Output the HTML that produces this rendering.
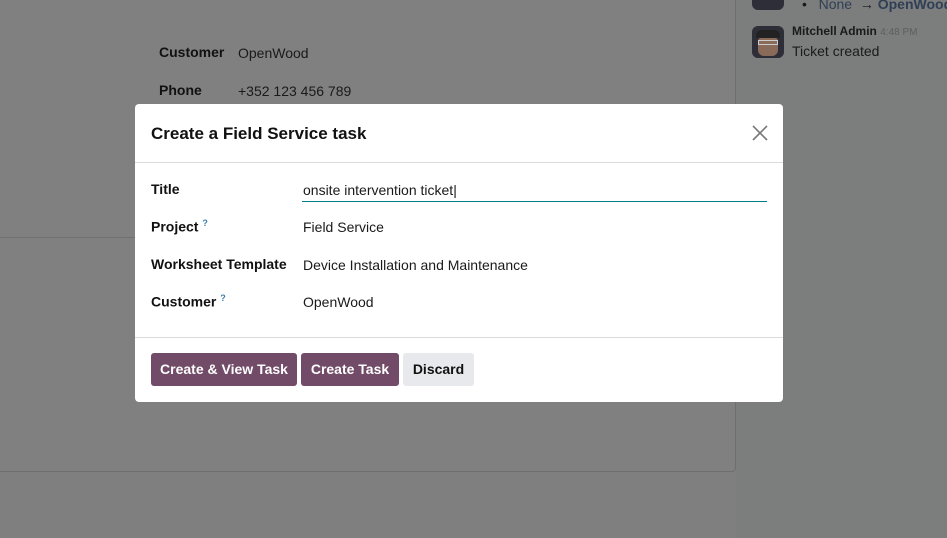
<!DOCTYPE html>
<html><head><meta charset="utf-8"><style>
*{box-sizing:border-box;margin:0;padding:0}
body{width:947px;height:538px;overflow:hidden;background:#7f7f7f;font-family:"Liberation Sans","DejaVu Sans",sans-serif;position:relative;color:#111}
.abs{position:absolute;white-space:nowrap}
.lbl{font-weight:bold;font-size:14px;color:#111}
.val{font-size:14px;color:#1a1a1a}
.btn{position:absolute;top:353px;height:33px;border-radius:3px;font-size:14px;font-weight:bold;line-height:33px;text-align:center}
</style></head><body>
<div class="abs" style="left:0;top:0;width:736px;height:472px;border-right:1px solid #6e6e6e;border-bottom:1px solid #6e6e6e;border-bottom-right-radius:4px;background:#808080"></div>
<div class="abs" style="left:0;top:237px;width:735px;height:1px;background:#717171"></div>
<div class="abs" style="left:736px;top:0;width:211px;height:538px;background:#7c7d7d"></div>
<div class="abs lbl" style="left:159px;top:44px">Customer</div>
<div class="abs val" style="left:238px;top:45px">OpenWood</div>
<div class="abs lbl" style="left:159px;top:82px">Phone</div>
<div class="abs val" style="left:238px;top:83px">+352 123 456 789</div>
<div class="abs" style="left:752px;top:-8px;width:32px;height:18px;border-radius:6px;background:#2e2e38"></div>
<div class="abs" style="left:802px;top:-4px;font-size:14px;color:#1a1a1a">•&nbsp;&nbsp;&nbsp;<span style="color:#2f3f55">None</span>&nbsp;&nbsp;→ <span style="color:#2f3f55;font-weight:bold">OpenWood</span></div>
<div class="abs" style="left:752px;top:26px;width:32px;height:32px;border-radius:6px;background:#2e2e38;overflow:hidden">
<div class="abs" style="left:6px;top:10px;width:20px;height:20px;border-radius:6px;background:#8a6a58"></div>
<div class="abs" style="left:4px;top:4px;width:24px;height:8px;border-radius:6px 6px 2px 2px;background:#222"></div>
<div class="abs" style="left:6px;top:14px;width:20px;height:5px;border:1px solid #ccc"></div></div>
<div class="abs" style="left:792px;top:24px;font-size:12px;font-weight:bold;color:#1a1a1a">Mitchell Admin <span style="font-weight:normal;font-size:10px;color:#5e5e5e">4:48 PM</span></div>
<div class="abs" style="left:792px;top:43px;font-size:14px;color:#1a1a1a">Ticket created</div>

<div class="abs" style="left:135px;top:104px;width:648px;height:298px;background:#fff;border-radius:4px">
<div class="abs" style="left:16px;top:20px;font-size:17px;font-weight:bold;color:#111">Create a Field Service task</div>
<svg class="abs" style="left:617px;top:21px" width="16" height="16"><path d="M1 1L15 15M15 1L1 15" stroke="#777" stroke-width="1.6"/></svg>
<div class="abs" style="left:0;top:58px;width:648px;height:1px;background:#d8dadd"></div>
<div class="abs lbl" style="left:16px;top:77px">Title</div>
<div class="abs val" style="left:168px;top:78px">onsite intervention ticket<span style="font-weight:normal">|</span></div>
<div class="abs" style="left:167px;top:97px;width:465px;height:1px;background:#017e84"></div>
<div class="abs lbl" style="left:16px;top:114px">Project <sup style="color:#3a80b0;font-size:9px">?</sup></div>
<div class="abs val" style="left:168px;top:115px">Field Service</div>
<div class="abs lbl" style="left:16px;top:152px">Worksheet Template</div>
<div class="abs val" style="left:168px;top:153px">Device Installation and Maintenance</div>
<div class="abs lbl" style="left:16px;top:189px">Customer <sup style="color:#3a80b0;font-size:9px">?</sup></div>
<div class="abs val" style="left:168px;top:190px">OpenWood</div>
<div class="abs" style="left:0;top:233px;width:648px;height:1px;background:#d8dadd"></div>
</div>
<div class="btn" style="left:151px;width:146px;background:#714b67;color:#fff">Create &amp; View Task</div>
<div class="btn" style="left:301px;width:98px;background:#714b67;color:#fff">Create Task</div>
<div class="btn" style="left:403px;width:71px;background:#e7e9ed;color:#111">Discard</div>
</body></html>
